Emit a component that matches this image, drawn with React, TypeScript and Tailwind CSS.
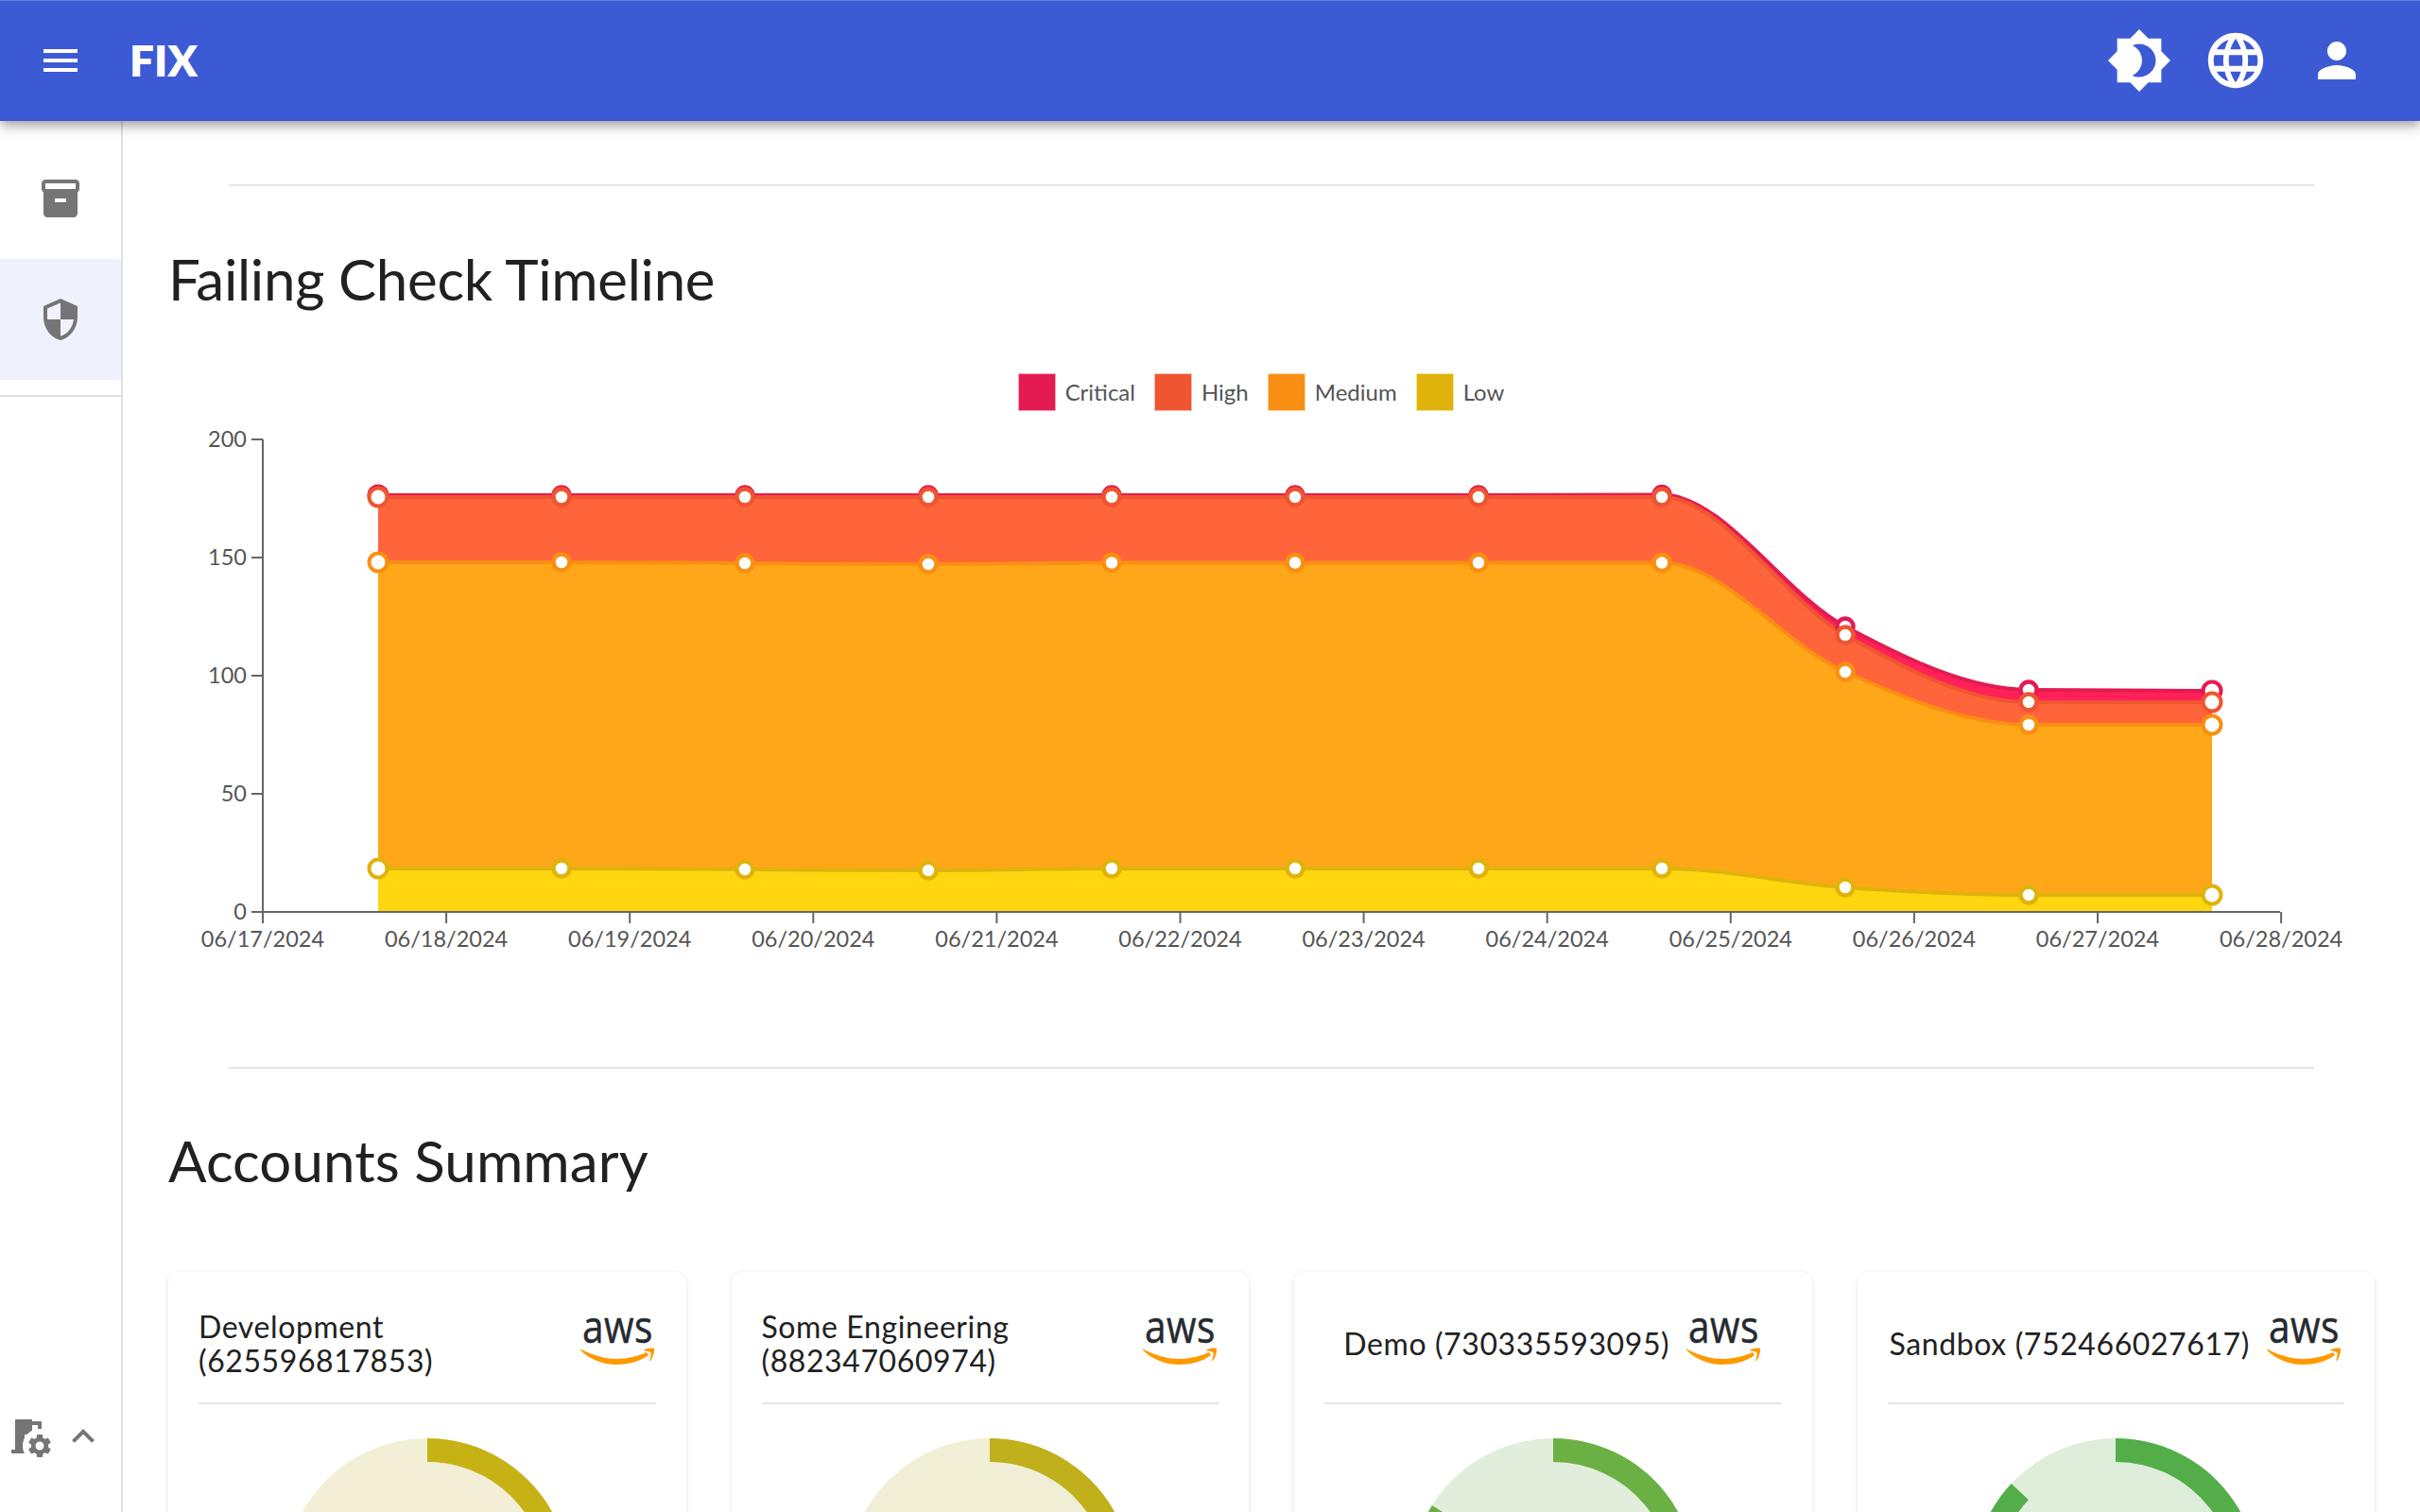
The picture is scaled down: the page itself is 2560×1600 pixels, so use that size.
import React from "react";

const xs = Array.from({ length: 11 }, (_, i) => 400 + 194 * i);

const series = [
  { name: "Critical", line: "#e41b52", area: "#ff2158", ys: [524, 524, 524, 524, 524, 524, 524, 523.5, 663, 730, 731] },
  { name: "High", line: "#ee5530", area: "#ff643b", ys: [526, 526, 526, 526, 526, 526, 526, 526, 672, 743, 743] },
  { name: "Medium", line: "#f98f12", area: "#ffa719", ys: [595, 595, 596, 597, 595.5, 595.5, 595.5, 595.5, 711, 767, 767] },
  { name: "Low", line: "#dfb30b", area: "#ffd60f", ys: [919, 919, 920, 921, 919, 919, 919, 919, 939, 947, 947] },
];

function monotonePath(px: number[], py: number[]) {
  const n = px.length;
  const h: number[] = [];
  const s: number[] = [];
  for (let i = 0; i < n - 1; i++) {
    h[i] = px[i + 1] - px[i];
    s[i] = (py[i + 1] - py[i]) / h[i];
  }
  const sign = (v: number) => (v < 0 ? -1 : 1);
  const t: number[] = [];
  for (let i = 1; i < n - 1; i++) {
    const p = (s[i - 1] * h[i] + s[i] * h[i - 1]) / (h[i - 1] + h[i]);
    t[i] = (sign(s[i - 1]) + sign(s[i])) * Math.min(Math.abs(s[i - 1]), Math.abs(s[i]), 0.5 * Math.abs(p)) || 0;
  }
  t[0] = (3 * s[0] - t[1]) / 2;
  t[n - 1] = (3 * s[n - 2] - t[n - 2]) / 2;
  let d = `M${px[0]} ${py[0]}`;
  for (let i = 0; i < n - 1; i++) {
    const dx = h[i] / 3;
    d += `C${px[i] + dx} ${py[i] + dx * t[i]} ${px[i + 1] - dx} ${py[i + 1] - dx * t[i + 1]} ${px[i + 1]} ${py[i + 1]}`;
  }
  return d;
}

const ticksX = ["06/17/2024", "06/18/2024", "06/19/2024", "06/20/2024", "06/21/2024", "06/22/2024", "06/23/2024", "06/24/2024", "06/25/2024", "06/26/2024", "06/27/2024", "06/28/2024"];
const ticksY = [200, 150, 100, 50, 0];

function Chart() {
  return (
    <svg viewBox="178 445 2334 565" width={2334} height={565} className="block">
      {series.map((s) => {
        const line = monotonePath(xs, s.ys);
        return <path key={s.name} d={`${line}L2340 965L400 965Z`} fill={s.area} />;
      })}
      {series.map((s) => (
        <path key={s.name} d={monotonePath(xs, s.ys)} fill="none" stroke={s.line} strokeWidth={4} />
      ))}
      <g stroke="#666666" strokeWidth={2}>
        <line x1={278} y1={465} x2={278} y2={977} />
        <line x1={266} y1={965} x2={2412} y2={965} />
        {ticksY.map((t) => (
          <line key={t} x1={266} x2={278} y1={965 - t * 2.5} y2={965 - t * 2.5} />
        ))}
        {ticksX.map((t, i) => (
          <line key={t} x1={278 + i * 194.1} x2={278 + i * 194.1} y1={965} y2={977} />
        ))}
      </g>
      <g fill="#555555" fontSize={23.5}>
        {ticksY.map((t) => (
          <text key={t} x={261} y={973 - t * 2.5} textAnchor="end">{t}</text>
        ))}
        {ticksX.map((t, i) => (
          <text key={t} x={278 + i * 194.1} y={1002} textAnchor="middle">{t}</text>
        ))}
      </g>
      {series.map((s) =>
        s.ys.map((y, i) => {
          const edge = i === 0 || i === 10;
          return <circle key={s.name + i} cx={xs[i]} cy={y} r={edge ? 9.5 : 8.5} fill="#ffffff" stroke={s.line} strokeWidth={edge ? 4 : 4.5} />;
        })
      )}
    </svg>
  );
}

function Icon({ d, size, className }: { d: string; size: number; className?: string }) {
  return (
    <svg viewBox="0 0 24 24" width={size} height={size} className={className} fill="currentColor">
      <path d={d} />
    </svg>
  );
}

function AwsLogo() {
  return (
    <svg viewBox="0 -24 92 104" width={92} height={104} className="shrink-0 -mr-[12px]">
      <text x={2} y={27} fontSize={47} fill="#252a30" stroke="#252a30" strokeWidth={0.5} textLength={75} lengthAdjust="spacingAndGlyphs" style={{ fontFamily: "'Open Sans', sans-serif" }}>aws</text>
      <path d="M0 33.5C14 41 28 44 38 44C50 44 61 41 70 37L72 40C63 47 49 50 38 50C23 50 9 44 0 34.5Z" fill="#ff9900" />
      <path d="M67 34.5C70 33 75 32 78 33C78.5 36 77 42 74 46C73.5 46.5 73 46 73.2 45.5C74 43 75 39 74.5 37.5C73 36 70 35.5 67.5 35.5Z" fill="#ff9900" />
    </svg>
  );
}

function Donut({ angle, pale, color }: { angle: number; pale: string; color: string }) {
  const R = 151;
  const r = 126;
  const a = (angle * Math.PI) / 180;
  const large = angle > 180 ? 1 : 0;
  const ox = R * Math.sin(a);
  const oy = -R * Math.cos(a);
  const ix = r * Math.sin(a);
  const iy = -r * Math.cos(a);
  return (
    <svg viewBox="-151 -151 302 302" width={302} height={302} className="block mx-auto">
      <circle cx={0} cy={0} r={R} fill={pale} />
      <path d={`M0 ${-R}A${R} ${R} 0 ${large} 1 ${ox} ${oy}L${ix} ${iy}A${r} ${r} 0 ${large} 0 0 ${-r}Z`} fill={color} />
    </svg>
  );
}

const cards = [
  { title: "Development (625596817853)", angle: 130, pale: "#f2efd6", color: "#c6b215" },
  { title: "Some Engineering (882347060974)", angle: 130, pale: "#f1eed6", color: "#bfb01c" },
  { title: "Demo (730335593095)", angle: 302, pale: "#e1eedb", color: "#6bb043" },
  { title: "Sandbox (752466027617)", angle: 313, pale: "#dfeddb", color: "#53ae49" },
];

const legend = series.map((s) => ({ name: s.name, color: s.line }));

export default function App() {
  return (
    <div className="h-screen overflow-hidden flex flex-col bg-white text-[#212121] font-['Lato',sans-serif]">
      <header className="relative z-10 h-[128px] shrink-0 flex items-center bg-[#3d5ad5] text-white shadow-[inset_0_1px_0_#6179dd,0_4px_8px_-2px_rgba(0,0,0,0.2),0_8px_10px_0_rgba(0,0,0,0.14),0_2px_20px_0_rgba(0,0,0,0.12)]">
        <Icon className="ml-[40px]" size={48} d="M3 18h18v-2H3v2zm0-5h18v-2H3v2zm0-7v2h18V6H3z" />
        <span className="ml-[49px] text-[46px] font-extrabold leading-none pb-[1px]">FIX</span>
        <div className="ml-auto flex items-center">
          <Icon size={70} d="M20 8.69V4h-4.69L12 .69 8.69 4H4v4.69L.69 12 4 15.31V20h4.69L12 23.31 15.31 20H20v-4.69L23.31 12 20 8.69zM12 18c-.89 0-1.74-.2-2.5-.55C11.56 16.5 13 14.42 13 12s-1.44-4.5-3.5-5.45C10.26 6.2 11.11 6 12 6c3.31 0 6 2.69 6 6s-2.69 6-6 6z" />
          <Icon className="ml-[32px]" size={70} d="M11.99 2C6.47 2 2 6.48 2 12s4.47 10 9.99 10C17.52 22 22 17.52 22 12S17.52 2 11.99 2zm6.93 6h-2.95c-.32-1.25-.78-2.45-1.38-3.56 1.84.63 3.37 1.91 4.33 3.56zM12 4.04c.83 1.2 1.48 2.53 1.91 3.96h-3.82c.43-1.43 1.08-2.76 1.91-3.96zM4.26 14C4.1 13.36 4 12.69 4 12s.1-1.36.26-2h3.38c-.08.66-.14 1.32-.14 2 0 .68.06 1.34.14 2H4.26zm.82 2h2.95c.32 1.25.78 2.45 1.38 3.56-1.84-.63-3.37-1.9-4.33-3.56zm2.95-8H5.08c.96-1.66 2.49-2.93 4.33-3.56C8.81 5.55 8.35 6.75 8.03 8zM12 19.96c-.83-1.2-1.48-2.53-1.91-3.96h3.82c-.43 1.43-1.08 2.76-1.91 3.96zM14.34 14H9.66c-.09-.66-.16-1.32-.16-2 0-.68.07-1.35.16-2h4.68c.09.65.16 1.32.16 2 0 .68-.07 1.34-.16 2zm.25 5.56c.6-1.11 1.06-2.31 1.38-3.56h2.95c-.96 1.65-2.49 2.93-4.33 3.56zM16.36 14c.08-.66.14-1.32.14-2 0-.68-.06-1.34-.14-2h3.38c.16.64.26 1.31.26 2s-.1 1.36-.26 2h-3.38z" />
          <Icon className="ml-[42px] mr-[58px]" size={60} d="M12 12c2.21 0 4-1.79 4-4s-1.79-4-4-4-4 1.79-4 4 1.79 4 4 4zm0 2c-2.67 0-8 1.34-8 4v2h16v-2c0-2.66-5.33-4-8-4z" />
        </div>
      </header>

      <div className="flex flex-1 min-h-0">
        <aside className="w-[130px] shrink-0 border-r-2 border-[#e0e0e0] flex flex-col text-[#757575]">
          <div className="pt-[18px] border-b-2 border-[#e0e0e0] pb-[16px] w-[128px]">
            <div className="h-[128px] flex items-center justify-center">
              <Icon size={48} d="M20 2H4c-1 0-2 .9-2 2v3.01c0 .72.43 1.34 1 1.69V20c0 1.1 1.1 2 2 2h14c.9 0 2-.9 2-2V8.7c.57-.35 1-.97 1-1.69V4c0-1.1-1-2-2-2zm-5 12H9v-2h6v2zm5-7H4V4h16v3z" />
            </div>
            <div className="h-[128px] flex items-center justify-center bg-[#eff1fc]">
              <Icon size={48} d="M12 1L3 5v6c0 5.55 3.84 10.74 9 12 5.16-1.26 9-6.45 9-12V5l-9-4zm0 10.99h7c-.53 4.12-3.28 7.79-7 8.94V12H5V6.3l7-3.11v8.8z" />
            </div>
          </div>
          <div className="mt-auto mb-[56px] flex items-center pl-[6px]">
            <span className="relative block w-[48px] h-[48px]">
              <Icon size={48} d="M14 6v15H3v-2h2V3h9v1h5v15h2v2h-4V6h-3zm-4 5v2h2v-2h-2z" />
              <span className="absolute left-[18px] top-[16px] w-[36px] h-[36px] flex items-center justify-center rounded-full bg-white">
                <Icon size={30} d="M19.14 12.94c.04-.3.06-.61.06-.94 0-.32-.02-.64-.07-.94l2.03-1.58c.18-.14.23-.41.12-.61l-1.92-3.32c-.12-.22-.37-.29-.59-.22l-2.39.96c-.5-.38-1.03-.7-1.62-.94l-.36-2.54c-.04-.24-.24-.41-.48-.41h-3.84c-.24 0-.43.17-.47.41l-.36 2.54c-.59.24-1.13.57-1.62.94l-2.39-.96c-.22-.08-.47 0-.59.22L2.74 8.87c-.12.21-.08.47.12.61l2.03 1.58c-.05.3-.09.63-.09.94s.02.64.07.94l-2.03 1.58c-.18.14-.23.41-.12.61l1.92 3.32c.12.22.37.29.59.22l2.39-.96c.5.38 1.03.7 1.62.94l.36 2.54c.05.24.24.41.48.41h3.84c.24 0 .44-.17.47-.41l.36-2.54c.59-.24 1.13-.56 1.62-.94l2.39.96c.22.08.47 0 .59-.22l1.92-3.32c.12-.22.07-.47-.12-.61l-2.01-1.58zM12 15.6c-1.98 0-3.6-1.62-3.6-3.6s1.62-3.6 3.6-3.6 3.6 1.62 3.6 3.6-1.62 3.6-3.6 3.6z" />
              </span>
            </span>
            <Icon className="ml-[10px]" size={48} d="M12 8l-6 6 1.41 1.41L12 10.83l4.59 4.58L18 14z" />
          </div>
        </aside>

        <main className="flex-1 min-w-0 overflow-hidden px-[48px] pt-[67px]">
          <div className="mx-[64px] h-[2px] bg-[#e5e5e5]" />
          <h2 className="mt-[62px] text-[60px] leading-[72px] font-normal tracking-[-0.3px]">Failing Check Timeline</h2>
          <div className="mt-[64px] flex justify-center pr-[22px] text-[24px] leading-[40px] text-[#555555]">
            {legend.map((l) => (
              <div key={l.name} className="flex items-center mr-[20px] last:mr-0">
                <span className="w-[40px] h-[40px] border border-white/60" style={{ backgroundColor: l.color }} />
                <span className="ml-[10px]">{l.name}</span>
              </div>
            ))}
          </div>
          <div className="mt-[10px]">
            <Chart />
          </div>
          <div className="mt-[119px] mx-[64px] h-[2px] bg-[#e5e5e5]" />
          <h2 className="mt-[61px] text-[60px] leading-[72px] font-normal tracking-[0.1px]">Accounts Summary</h2>
          <div className="mt-[82px] grid grid-cols-4 gap-[48px]">
            {cards.map((c) => (
              <section key={c.title} className="rounded-[10px] bg-white px-[32px] pt-[34px] pb-[32px] shadow-[0_2px_6px_rgba(0,0,0,0.1),0_0_2px_rgba(0,0,0,0.05)]">
                <div className="h-[84px] flex items-center justify-center gap-[18px] text-[32px] leading-[36px] tracking-[0.6px]">
                  <span>{c.title}</span>
                  <AwsLogo />
                </div>
                <div className="mt-[20px] h-[2px] bg-[#e5e5e5]" />
                <div className="mt-[36px]">
                  <Donut angle={c.angle} pale={c.pale} color={c.color} />
                </div>
              </section>
            ))}
          </div>
        </main>
      </div>
    </div>
  );
}
